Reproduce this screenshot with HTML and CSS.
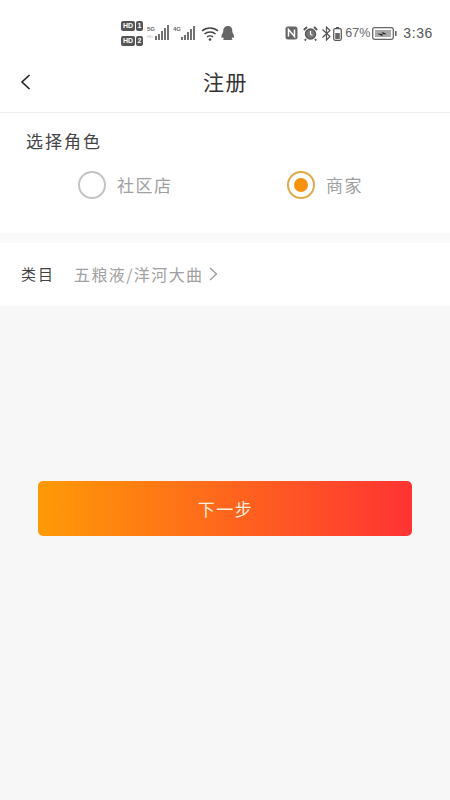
FILE: index.html
```html
<!DOCTYPE html>
<html lang="zh-CN">
<head>
<meta charset="utf-8">
<title>注册</title>
<link rel="stylesheet" href="styles.css">
</head>
<body>
<div class="page">
  <header class="top">
    <div class="status">
      <div class="status-left">
        <div class="hd-stack">
          <div class="hd"><span class="hd-box">HD</span><span class="hd-num">1</span></div>
          <div class="hd"><span class="hd-box">HD</span><span class="hd-num">2</span></div>
        </div>
        <svg class="sig" width="24" height="18" viewBox="0 0 24 18"><text x="0" y="7" class="sig-t">5G</text><text x="0" y="14" class="sig-s">HD</text><path d="M9 12v4M12 10v6M15 7v9M18 4v12M21 1v15" stroke="#444" stroke-width="1.500" fill="none"/></svg>
        <svg class="sig" width="24" height="18" viewBox="0 0 24 18"><text x="0" y="7" class="sig-t">4G</text><path d="M9 13v3M12 11v5M15 8v8M18 5v11M21 2v14" stroke="#444" stroke-width="1.500" fill="none"/></svg>
        <svg class="wifi" width="18" height="15" viewBox="0 0 18 15"><path d="M1 5c4.500-4 11.500-4 16 0M3.500 8c3-2.700 8-2.700 11 0M6 11c1.600-1.400 4.400-1.400 6 0" stroke="#444" stroke-width="1.600" fill="none"/><circle cx="9" cy="13.500" r="1.300" fill="#444"/></svg>
        <svg class="qq" width="14" height="15" viewBox="0 0 14 15"><path d="M7 0c3 0 4.300 2.200 4.300 5 0 1 .2 1.500.9 2.800.9 1.700 1.100 3.800.5 4.200-.4.200-.8-.3-1.100-.9-.2.800-.6 1.400-1.100 1.900.7.300 1.100.6 1.100 1H1.900c0-.4.400-.7 1.100-1-.5-.5-.9-1.100-1.100-1.900-.3.600-.7 1.100-1.100.9-.6-.4-.4-2.500.5-4.200.7-1.300.9-1.800.9-2.800C2.200 2.200 4 0 7 0z" fill="#666"/></svg>
      </div>
      <div class="status-right">
        <svg width="13" height="14" viewBox="0 0 13 14"><rect x=".5" y=".5" width="12" height="13" rx="2.500" fill="#666"/><path d="M3.500 10.500V3.500L9.500 10.500V3.500" stroke="#fff" stroke-width="1.500" fill="none"/></svg>
        <svg class="alarm" width="15" height="15" viewBox="0 0 15 15"><circle cx="7.500" cy="8" r="5" fill="#777" stroke="#555" stroke-width="1.400"/><path d="M7.500 5v3.200l2 1.200" stroke="#fff" stroke-width="1.100" fill="none"/><path d="M.8 4L4 1M14.200 4L11 1M3 13l-1.200 1.500M12 13l1.200 1.500" stroke="#555" stroke-width="1.800" fill="none"/></svg>
        <svg width="9" height="15" viewBox="0 0 9 15"><path d="M.5 3.500l7.500 7L4.500 14V1L8 4.500.5 11.500" stroke="#555" stroke-width="1.200" fill="none"/></svg>
        <svg class="minibatt" width="9" height="15" viewBox="0 0 9 15"><rect x=".7" y="2.700" width="7.600" height="11.600" rx="1.500" fill="none" stroke="#555" stroke-width="1.200"/><rect x="3" y="1" width="3" height="1.500" fill="#555"/><rect x="2.200" y="7" width="4.600" height="6" fill="#666"/></svg>
        <span class="pct">67%</span>
        <svg class="batt" width="25" height="13" viewBox="0 0 25 13"><rect x=".7" y=".7" width="20.600" height="11.600" rx="1.800" fill="#fff" stroke="#666" stroke-width="1.300"/><rect x="23" y="4" width="1.600" height="5" fill="#666"/><rect x="3" y="3" width="16" height="7" fill="#aaa"/><path d="M5 6.800h6l-1-2 5 2.400h-5l1 2z" fill="#222"/></svg>
        <span class="time">3:36</span>
      </div>
    </div>
    <nav class="nav">
      <svg class="back" width="11" height="16" viewBox="0 0 11 16"><path d="M9.500 1L2 8l7.500 7" stroke="#222" stroke-width="1.600" fill="none"/></svg>
      <h1 class="title">注册</h1>
    </nav>
  </header>

  <section class="role">
    <div class="role-label">选择角色</div>
    <div class="options">
      <div class="option">
        <span class="radio"></span>
        <span class="option-text">社区店</span>
      </div>
      <div class="option">
        <span class="radio radio-on"><span class="dot"></span></span>
        <span class="option-text">商家</span>
      </div>
    </div>
  </section>

  <div class="band"></div>

  <section class="row">
    <span class="row-label">类目</span>
    <span class="row-value">五粮液/洋河大曲</span>
    <svg class="chev" width="9" height="14" viewBox="0 0 9 14"><path d="M1 1l6.500 6L1 13" stroke="#999" stroke-width="1.300" fill="none"/></svg>
  </section>

  <main class="rest">
    <button class="next" type="button">下一步</button>
  </main>
</div>
</body>
</html>
```

FILE: styles.css
```css
* { box-sizing: border-box; }
html, body { margin: 0; padding: 0; }
body {
  width: 450px;
  height: 800px;
  overflow: hidden;
  background: #fff;
  font-family: "Noto Sans CJK SC", "Noto Sans", sans-serif;
}
.page { display: flex; flex-direction: column; height: 800px; }

.top { height: 113px; border-bottom: 1px solid #eeeeee; flex: none; }

.status {
  height: 52px;
  display: flex;
  justify-content: flex-end;
  align-items: center;
  padding: 14px 17px 0 121px;
}
.status-left { display: flex; align-items: center; gap: 2px; margin-right: auto; }
.status-right { display: flex; align-items: center; gap: 4px; }
.hd-stack { display: flex; flex-direction: column; gap: 5px; margin-right: 2px; }
.hd { display: flex; gap: 1px; height: 10px; }
.hd-box, .hd-num {
  font: 700 7px/10px "Liberation Sans", sans-serif;
  background: #555;
  color: #fff;
  border-radius: 2px;
  text-align: center;
}
.hd-box { width: 14px; }
.hd-num { width: 7px; }
.sig-t { font: 700 6px "Liberation Sans", sans-serif; fill: #666; }
.sig-s { font: 400 4px "Liberation Sans", sans-serif; fill: #bbb; }
.wifi { margin-left: 2px; }
.alarm { margin-left: 1px; }
.minibatt { margin-left: -2px; }
.pct { font: 400 12.500px/15px "Liberation Sans", sans-serif; color: #666; margin-left: -1px; }
.batt { margin-left: -2px; }
.time { font: 400 14px/15px "Liberation Sans", sans-serif; color: #555; letter-spacing: .6px; margin-left: 2px; }

.nav {
  height: 60px;
  display: flex;
  align-items: center;
  justify-content: center;
  padding-bottom: 3px;
  position: relative;
}
.back { position: absolute; left: 20px; top: 22px; }
.title {
  margin: 0;
  font-size: 21px;
  font-weight: 400;
  line-height: 28px;
  letter-spacing: 1.500px;
  color: #333;
  padding-left: 1px;
}

.role { height: 120px; padding: 16px 0 0 26px; flex: none; }
.role-label { font-size: 17px; line-height: 24px; letter-spacing: 2px; color: #444; }
.options { display: grid; grid-template-columns: 209px auto; justify-content: start; margin-top: 18px; padding-left: 52px; }
.option { display: flex; align-items: center; gap: 11px; }
.radio {
  width: 28px;
  height: 28px;
  border: 2px solid #c4c4c4;
  border-radius: 50%;
  display: flex;
  align-items: center;
  justify-content: center;
  flex: none;
}
.radio-on { border-color: #e0a94a; }
.dot { width: 14px; height: 14px; border-radius: 50%; background: #f7920f; }
.option-text { font-size: 17px; line-height: 24px; letter-spacing: 1.500px; color: #a0a0a0; }

.band { height: 10px; background: #f9f9f9; flex: none; }

.row {
  height: 63px;
  display: flex;
  align-items: center;
  padding: 0 0 2px 21px;
  flex: none;
}
.row-label { font-size: 15px; line-height: 22px; letter-spacing: 2px; color: #444; width: 53px; }
.row-value { font-size: 16px; line-height: 22px; letter-spacing: 1.400px; color: #a0a0a0; }
.chev { margin-left: 6px; }

.rest { flex: 1; background: #f7f7f8; padding: 175px 38px 0; }
.next {
  display: block;
  width: 374px;
  height: 55px;
  border: 0;
  border-radius: 5px;
  background: linear-gradient(90deg, #ff9a06 0%, #ff3333 100%);
  color: #ffeedd;
  font-family: inherit;
  font-size: 17px;
  letter-spacing: 1.500px;
  padding: 0 0 0 1px;
}
```
